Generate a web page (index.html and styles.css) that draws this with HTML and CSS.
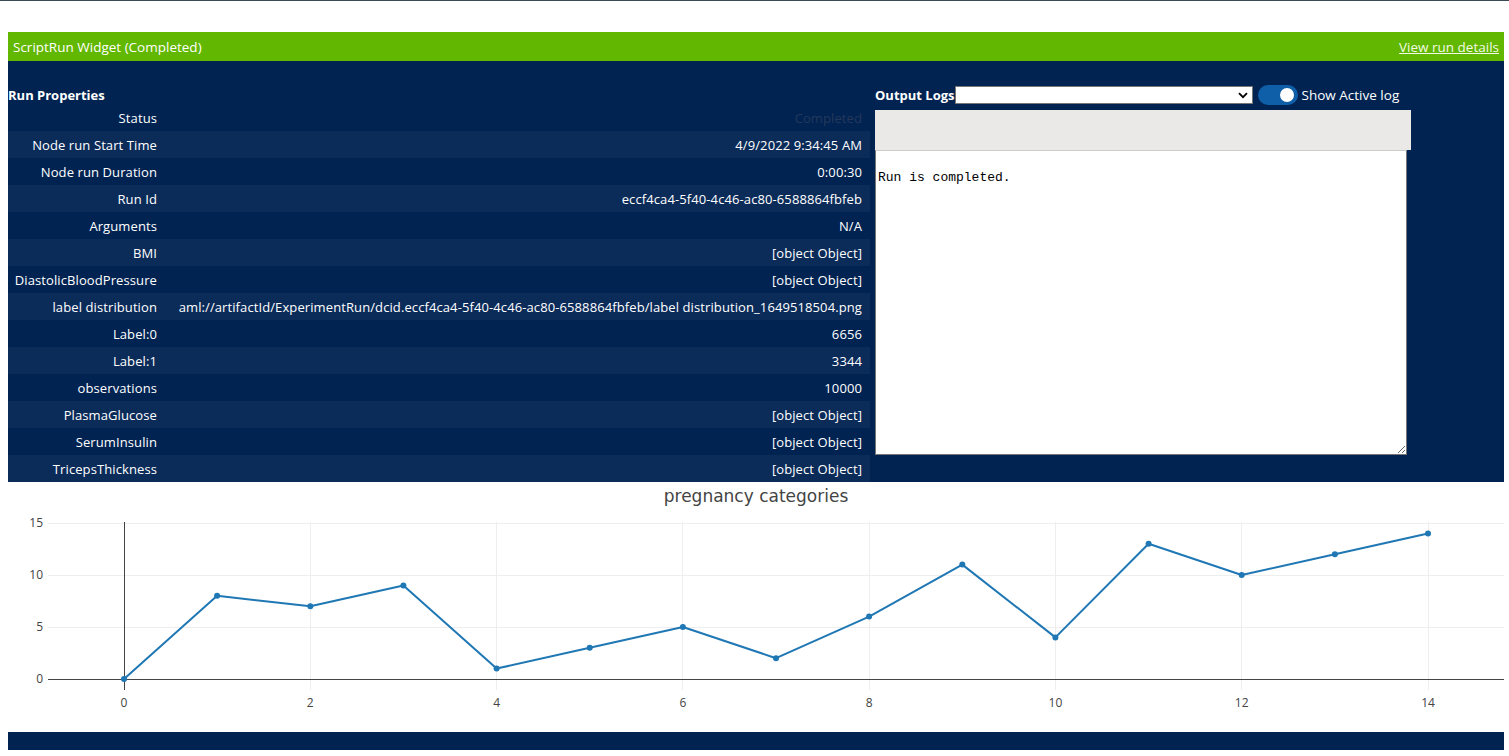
FILE: index.html
```html
<!DOCTYPE html>
<html>
<head>
<meta charset="utf-8">
<link rel="stylesheet" href="styles.css">
</head>
<body>
<div class="topline"></div>
<div class="widget">
  <div class="header">
    <span class="header-title">ScriptRun Widget (Completed)</span>
    <a class="header-link" href="#">View run details</a>
  </div>
  <div class="panel">
    <div class="props">
      <div class="section-title">Run Properties</div>
      <table class="prop-table">
        <tr><td class="k">Status</td><td class="v muted">Completed</td></tr>
        <tr><td class="k">Node run Start Time</td><td class="v">4/9/2022 9:34:45 AM</td></tr>
        <tr><td class="k">Node run Duration</td><td class="v">0:00:30</td></tr>
        <tr><td class="k">Run Id</td><td class="v">eccf4ca4-5f40-4c46-ac80-6588864fbfeb</td></tr>
        <tr><td class="k">Arguments</td><td class="v">N/A</td></tr>
        <tr><td class="k">BMI</td><td class="v">[object Object]</td></tr>
        <tr><td class="k">DiastolicBloodPressure</td><td class="v">[object Object]</td></tr>
        <tr><td class="k">label distribution</td><td class="v">aml://artifactId/ExperimentRun/dcid.eccf4ca4-5f40-4c46-ac80-6588864fbfeb/label distribution_1649518504.png</td></tr>
        <tr><td class="k">Label:0</td><td class="v">6656</td></tr>
        <tr><td class="k">Label:1</td><td class="v">3344</td></tr>
        <tr><td class="k">observations</td><td class="v">10000</td></tr>
        <tr><td class="k">PlasmaGlucose</td><td class="v">[object Object]</td></tr>
        <tr><td class="k">SerumInsulin</td><td class="v">[object Object]</td></tr>
        <tr><td class="k">TricepsThickness</td><td class="v">[object Object]</td></tr>
      </table>
    </div>
    <div class="logs">
      <div class="logs-bar">
        <span class="section-title">Output Logs</span>
        <div class="select"><svg class="chev" width="10" height="7" viewBox="0 0 10 7"><path d="M1 1.2 L5 5.2 L9 1.2" fill="none" stroke="#000" stroke-width="1.8"/></svg></div>
        <div class="toggle"><span class="knob"></span></div>
        <span class="toggle-label">Show Active log</span>
      </div>
      <div class="log-gray"></div>
      <textarea class="log-text" readonly>

Run is completed.</textarea>
    </div>
  </div>
  <div class="chart">
    <svg width="1496" height="250" viewBox="0 0 1496 250">
      <text x="748" y="20" class="title" text-anchor="middle">pregnancy categories</text>
      <g stroke="#eee" stroke-width="1">
        <line x1="40" y1="41.5" x2="1496" y2="41.5"/>
        <line x1="40" y1="93.5" x2="1496" y2="93.5"/>
        <line x1="40" y1="145.5" x2="1496" y2="145.5"/>
        <line x1="302.5" y1="40" x2="302.5" y2="208"/>
        <line x1="488.5" y1="40" x2="488.5" y2="208"/>
        <line x1="674.5" y1="40" x2="674.5" y2="208"/>
        <line x1="861.5" y1="40" x2="861.5" y2="208"/>
        <line x1="1047.5" y1="40" x2="1047.5" y2="208"/>
        <line x1="1233.5" y1="40" x2="1233.5" y2="208"/>
        <line x1="1420.5" y1="40" x2="1420.5" y2="208"/>
      </g>
      <g stroke="#444" stroke-width="1">
        <line x1="40" y1="197.5" x2="1496" y2="197.5"/>
        <line x1="116.5" y1="40" x2="116.5" y2="208"/>
      </g>
      <g class="tick" text-anchor="end">
        <text x="35" y="45">15</text>
        <text x="35" y="97">10</text>
        <text x="35" y="149">5</text>
        <text x="35" y="201">0</text>
      </g>
      <g class="tick" text-anchor="middle">
        <text x="116" y="225">0</text>
        <text x="302.3" y="225">2</text>
        <text x="488.6" y="225">4</text>
        <text x="674.9" y="225">6</text>
        <text x="861.1" y="225">8</text>
        <text x="1047.4" y="225">10</text>
        <text x="1233.7" y="225">12</text>
        <text x="1420" y="225">14</text>
      </g>
      <polyline fill="none" stroke="#1f77b4" stroke-width="2" stroke-linejoin="round"
        points="116,197 209.1,113.8 302.3,124.2 395.4,103.4 488.6,186.6 581.7,165.8 674.9,145 768,176.2 861.1,134.6 954.3,82.6 1047.4,155.4 1140.6,61.8 1233.7,93 1326.9,72.2 1420,51.4"/>
      <g fill="#1f77b4">
        <circle cx="116" cy="197" r="3"/>
        <circle cx="209.1" cy="113.8" r="3"/>
        <circle cx="302.3" cy="124.2" r="3"/>
        <circle cx="395.4" cy="103.4" r="3"/>
        <circle cx="488.6" cy="186.6" r="3"/>
        <circle cx="581.7" cy="165.8" r="3"/>
        <circle cx="674.9" cy="145" r="3"/>
        <circle cx="768" cy="176.2" r="3"/>
        <circle cx="861.1" cy="134.6" r="3"/>
        <circle cx="954.3" cy="82.6" r="3"/>
        <circle cx="1047.4" cy="155.4" r="3"/>
        <circle cx="1140.6" cy="61.8" r="3"/>
        <circle cx="1233.7" cy="93" r="3"/>
        <circle cx="1326.9" cy="72.2" r="3"/>
        <circle cx="1420" cy="51.4" r="3"/>
      </g>
    </svg>
  </div>
  <div class="footer-bar"></div>
</div>
</body>
</html>
```
FILE: styles.css
```css
html, body {
  margin: 0;
  padding: 0;
  background: #fff;
}
body {
  font-family: "Open Sans", "Noto Sans", sans-serif;
  font-size: 13px;
}
.topline {
  height: 1px;
  background: #3c4a58;
}
.widget {
  margin: 31px 0 0 8px;
  width: 1496px;
}
.header {
  height: 29px;
  background: #62b700;
  display: flex;
  align-items: center;
  justify-content: space-between;
  padding: 0 5px;
  color: #fff;
  font-size: 13.5px;
}
.header-link {
  color: #f2fbe6;
  text-decoration: underline;
}
.panel {
  background: #012352;
  display: flex;
  gap: 5px;
  padding-top: 25px;
  height: 396px;
  color: #fff;
}
.props {
  width: 862px;
}
.section-title {
  font-weight: 700;
  line-height: 18px;
  display: block;
}
.prop-table {
  border-collapse: collapse;
  width: 862px;
}
.prop-table tr {
  height: 27px;
}
.prop-table tr:nth-child(even) {
  background: #0b2b59;
}
.prop-table td {
  padding: 1px 0 0 0;
  height: 26px;
  text-align: right;
  white-space: nowrap;
  line-height: 26px;
  letter-spacing: 0.1px;
}
.prop-table td.k {
  width: 149px;
}
.prop-table td.v {
  padding-right: 8px;
}
.prop-table td.muted {
  color: #24385a;
}
.logs {
  width: 536px;
  display: flex;
  flex-direction: column;
}
.logs-bar {
  display: flex;
  align-items: center;
  height: 20px;
  margin-top: -1px;
}
.logs-bar .section-title {
  display: inline;
}
.select {
  width: 296px;
  height: 16px;
  background: #fff;
  border: 1px solid #767676;
  display: flex;
  align-items: center;
  justify-content: flex-end;
}
.chev {
  margin-right: 4px;
}
.toggle {
  width: 40px;
  height: 20px;
  border-radius: 10px;
  background: #0f5fa8;
  margin-left: 5px;
  display: flex;
  align-items: center;
  justify-content: flex-end;
}
.knob {
  width: 14px;
  height: 14px;
  border-radius: 50%;
  background: #fff;
  margin-right: 4px;
}
.toggle-label {
  margin-left: 4px;
  font-size: 13.5px;
}
.log-gray {
  margin-top: 5px;
  height: 40px;
  background: #ebe9e7;
}
.log-text {
  width: 532px;
  height: 305px;
  box-sizing: border-box;
  margin: 0;
  border: 1px solid #767676;
  border-top-color: #ccc;
  padding: 4px 2px 2px;
  font-family: "Liberation Mono", monospace;
  font-size: 13px;
  line-height: 15px;
  color: #000;
  background: #fff;
  resize: both;
}
.chart {
  height: 250px;
}
.chart svg {
  display: block;
}
.chart .title {
  font-family: "DejaVu Sans", Verdana, sans-serif;
  font-size: 17px;
  fill: #444;
}
.chart .tick text {
  font-family: "Open Sans", sans-serif;
  font-size: 12px;
  fill: #444;
}
.footer-bar {
  height: 18px;
  background: #012352;
}
```
